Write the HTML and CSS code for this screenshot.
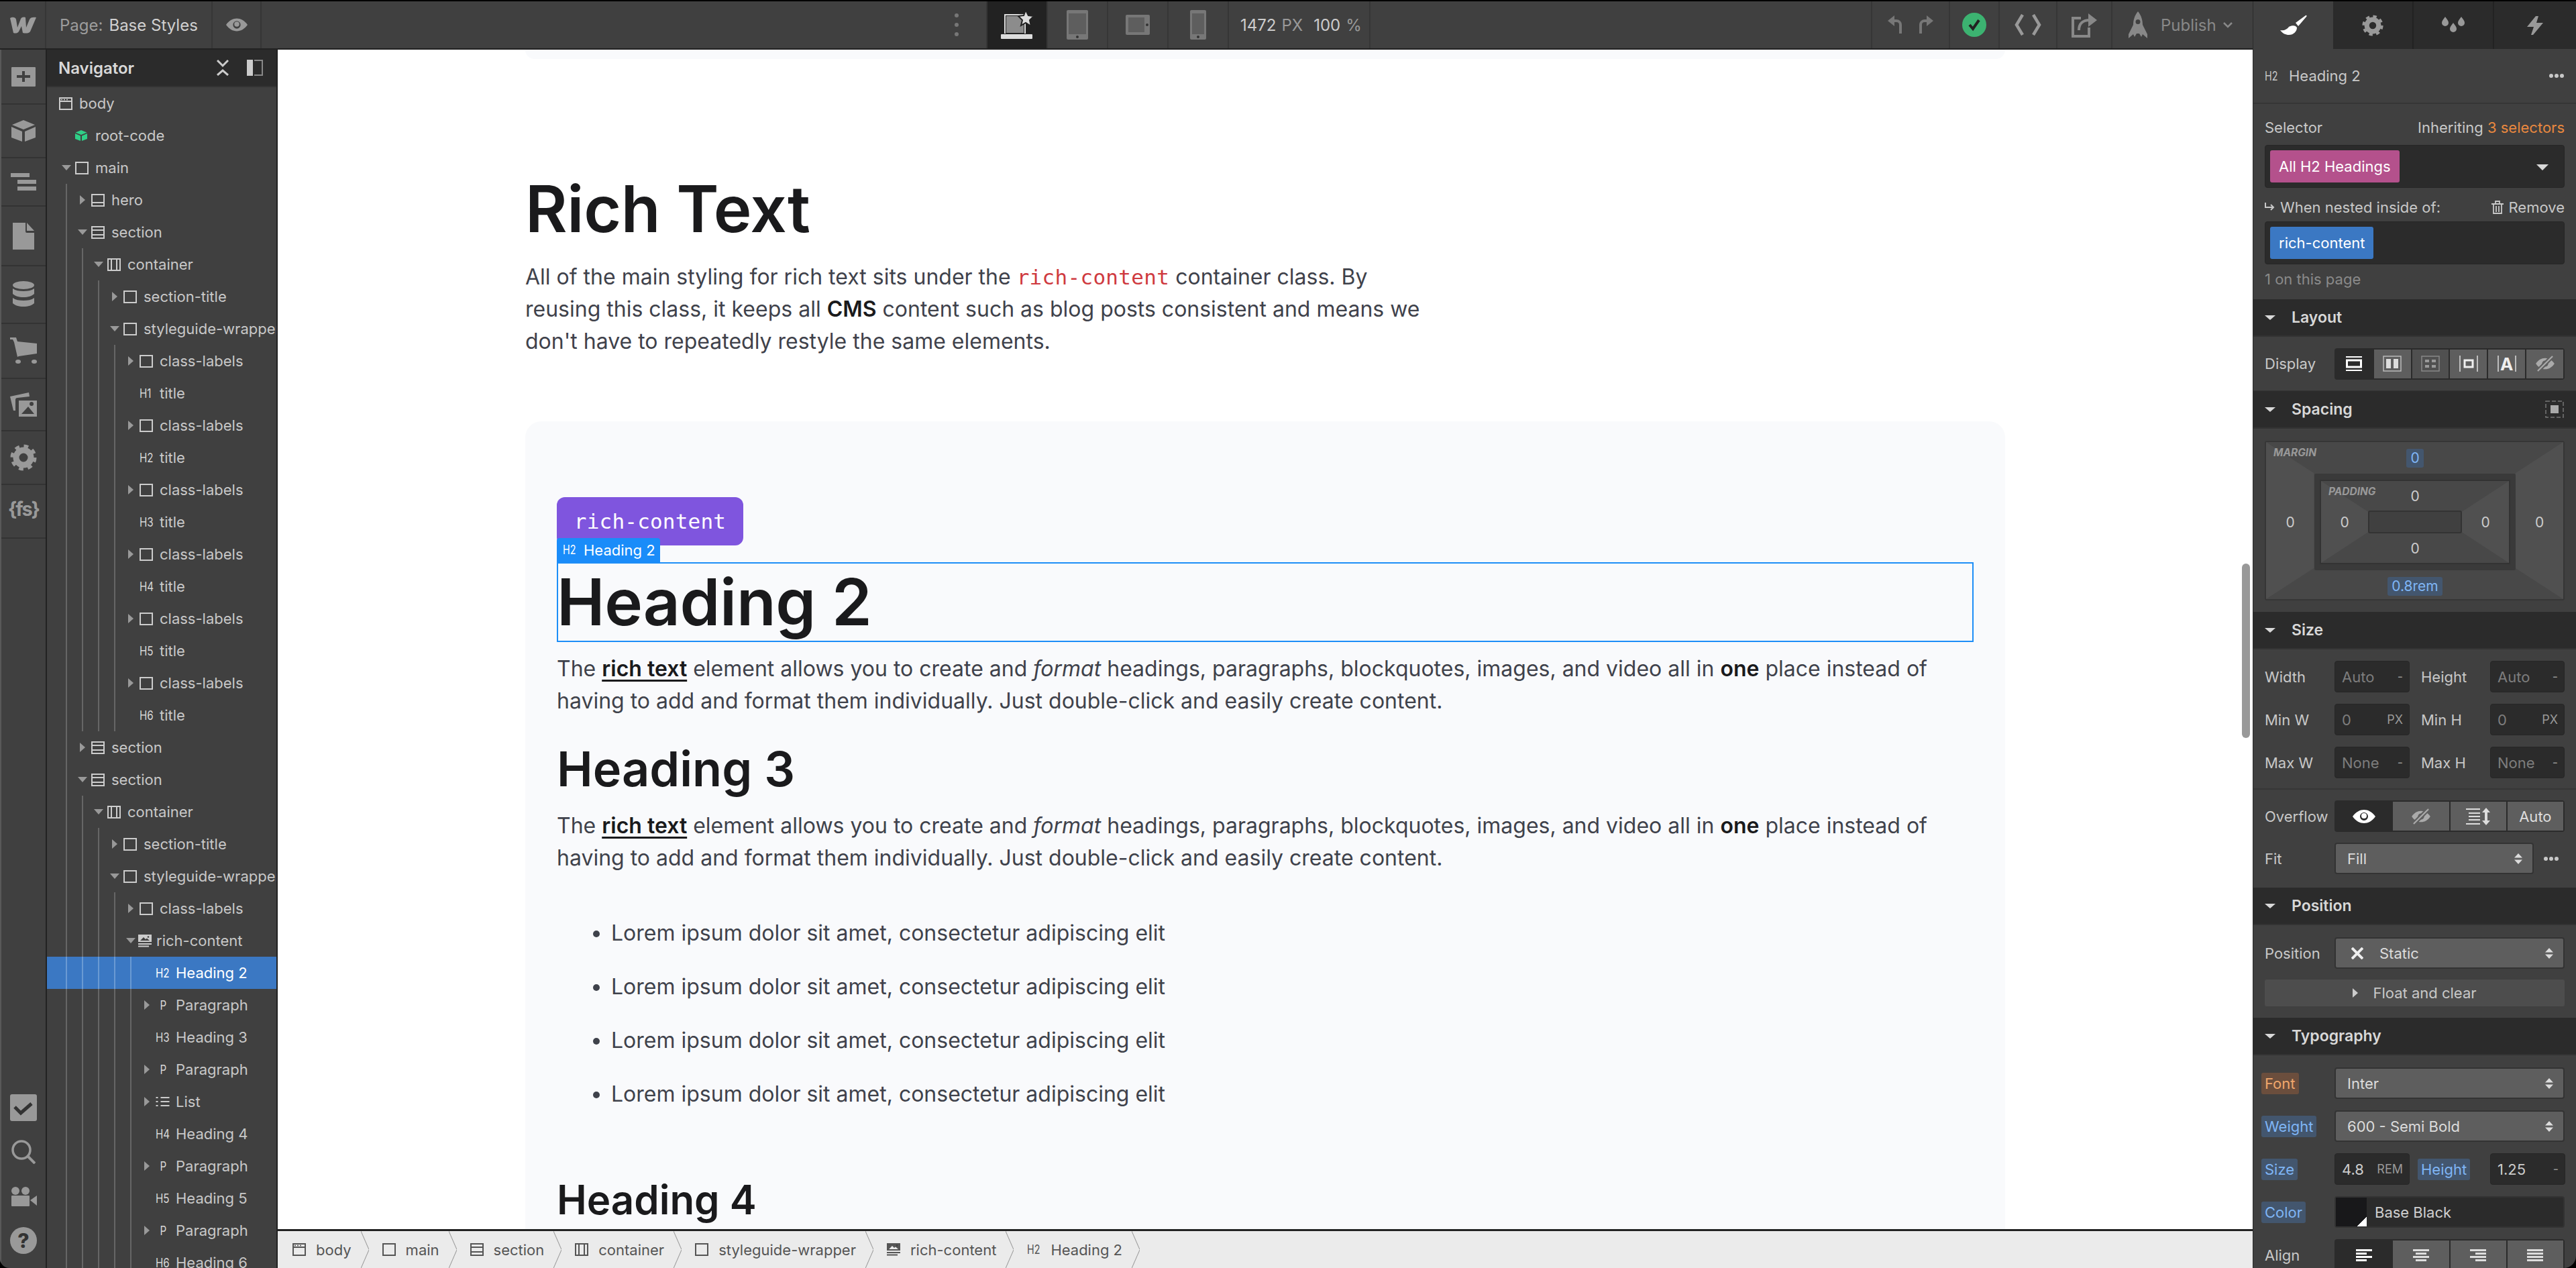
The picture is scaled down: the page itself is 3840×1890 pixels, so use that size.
FILE: index.html
```html
<!DOCTYPE html>
<html lang="en">
<head>
    <meta charset="UTF-8">
    <title>Base Styles - Designer</title>
    <link rel="stylesheet" href="styles.css">
</head>
<body>
<svg class="sprite" aria-hidden="true">
    <symbol id="i-box" viewBox="0 0 20 19"><rect x="1" y="1" width="18" height="17" fill="none" stroke="currentColor" stroke-width="2"/></symbol>
    <symbol id="i-hero" viewBox="0 0 20 19"><rect x="1" y="1" width="18" height="17" fill="none" stroke="currentColor" stroke-width="2"/><path d="M1 13h18" stroke="currentColor" stroke-width="2"/></symbol>
    <symbol id="i-section" viewBox="0 0 20 19"><rect x="1" y="1" width="18" height="17" fill="none" stroke="currentColor" stroke-width="2"/><path d="M1 6h18M1 13h18" stroke="currentColor" stroke-width="2"/></symbol>
    <symbol id="i-container" viewBox="0 0 20 19"><rect x="1" y="1" width="18" height="17" fill="none" stroke="currentColor" stroke-width="2"/><path d="M6 1v17M14 1v17" stroke="currentColor" stroke-width="2"/></symbol>
    <symbol id="i-body" viewBox="0 0 20 19"><rect x="1" y="1" width="18" height="17" fill="none" stroke="currentColor" stroke-width="2"/><path d="M1 6h18" stroke="currentColor" stroke-width="2"/><path d="M3 3.500h2M7 3.500h2M11 3.500h2" stroke="currentColor" stroke-width="1.400"/></symbol>
    <symbol id="i-rich" viewBox="0 0 20 19"><path fill="currentColor" fill-rule="evenodd" d="M0 0h20v11H0zM3 9l5-5 3 3 2-1.500 4 3.500z"/><circle cx="15" cy="3.500" r="1.300" fill="#404040"/><path d="M0 14h20M0 17.500h16" stroke="currentColor" stroke-width="1.800"/></symbol>
    <symbol id="i-list" viewBox="0 0 20 16"><path d="M7 2h13M7 8h13M7 14h13" stroke="currentColor" stroke-width="1.800"/><path d="M0 2h3M0 8h3M0 14h3" stroke="currentColor" stroke-width="2"/></symbol>
    <symbol id="i-cube" viewBox="0 0 36 32"><path fill="currentColor" d="M18 0l17 7-17 7L1 7zM0 10l16 7v15L0 26zM36 10l-16 7v15l16-6z"/></symbol>
    <symbol id="i-eye" viewBox="0 0 34 20"><path fill="currentColor" fill-rule="evenodd" d="M0 10C5 3 11 0 17 0s12 3 17 10c-5 7-11 10-17 10S5 17 0 10zm17-6a6 6 0 0 0 0 12 6 6 0 0 0 0-12z"/><circle cx="17" cy="9" r="4" fill="currentColor"/></symbol>
    <symbol id="i-noeye" viewBox="0 0 30 26"><path fill="currentColor" fill-rule="evenodd" d="M0 13C4 7 9 4 15 4s11 3 15 9c-4 6-9 9-15 9S4 19 0 13zm15-5a5 5 0 0 0 0 10 5 5 0 0 0 0-10z"/><path d="M2 26L28 0" stroke="#5e5e5e" stroke-width="7"/><path d="M3 25L27 1" stroke="currentColor" stroke-width="2.400"/></symbol>
    <symbol id="i-updown" viewBox="0 0 12 16"><path fill="currentColor" d="M6 0l6 6.500H0zM0 9.500h12L6 16z"/></symbol>
    <symbol id="i-dots" viewBox="0 0 24 8"><circle cx="4" cy="4" r="3" fill="currentColor"/><circle cx="12" cy="4" r="3" fill="currentColor"/><circle cx="20" cy="4" r="3" fill="currentColor"/></symbol>
    <symbol id="i-gear" viewBox="0 0 40 40"><circle cx="20" cy="20" r="11" fill="none" stroke="currentColor" stroke-width="9"/><circle cx="20" cy="20" r="16.500" fill="none" stroke="currentColor" stroke-width="6" stroke-dasharray="6.500 6.460"/></symbol>
</svg>

<div class="app">
    <div class="main-col">
        <header class="topbar">
            <div class="bar-cell logo-cell">
                <svg width="40" height="26" viewBox="0 0 40 26"><path fill="#9c9c9c" d="M1 3C4 1 9 1 10 5l2 12 5-13c1-2 3-3 7-2l1 15 5-12c1-3 5-4 10-3l-9 21c-2 3-7 3-11 2l-2-10-4 8c-2 3-6 3-8 2z"/></svg>
            </div>
            <div class="bar-cell page-cell"><span class="page-key">Page:</span><span class="page-name">Base Styles</span></div>
            <div class="bar-cell eye-cell"><svg class="icon-eye" width="32" height="20"><use href="#i-eye"/></svg></div>
            <div class="bar-gap-fixed"></div>
            <div class="bar-cell dots-cell"><svg width="6" height="34" viewBox="0 0 6 34"><circle cx="3" cy="3" r="3" fill="#777"/><circle cx="3" cy="17" r="3" fill="#777"/><circle cx="3" cy="31" r="3" fill="#777"/></svg></div>
            <div class="bar-cell device-cell is-active">
                <svg width="52" height="46" viewBox="0 0 52 46"><path fill="none" stroke="#ddd" stroke-width="2" d="M8 36V8h30v28"/><rect x="10" y="10" width="26" height="25" fill="#8c8c8c"/><rect x="2" y="37" width="47" height="7" rx="1" fill="#ddd"/><path fill="#ddd" stroke="#222" stroke-width="2" d="M39 1l4 8 8 1-6 6 2 9-8-5-7 4 2-8-6-6 8-1z"/></svg>
            </div>
            <div class="bar-cell device-cell">
                <svg width="32" height="44" viewBox="0 0 32 44"><rect width="32" height="44" rx="2" fill="#777"/><rect x="3" y="5" width="26" height="31" fill="#5e5e5e"/><circle cx="16" cy="40" r="2" fill="#333"/></svg>
            </div>
            <div class="bar-cell device-cell">
                <svg width="36" height="30" viewBox="0 0 36 30"><rect width="36" height="30" rx="2" fill="#777"/><rect x="4" y="4" width="24" height="22" fill="#5e5e5e"/><circle cx="32" cy="15" r="2" fill="#333"/></svg>
            </div>
            <div class="bar-cell device-cell">
                <svg width="24" height="44" viewBox="0 0 24 44"><rect width="24" height="44" rx="2" fill="#777"/><rect x="3" y="5" width="18" height="31" fill="#5e5e5e"/><circle cx="12" cy="40" r="2" fill="#333"/></svg>
            </div>
            <div class="bar-cell size-cell"><b>1472</b><span class="dim">PX</span><b class="zoom-val">100</b><span class="dim">%</span></div>
            <div class="bar-gap"></div>
            <div class="bar-cell undo-cell">
                <svg width="22" height="30" viewBox="0 0 22 30"><path fill="none" stroke="#777" stroke-width="4" d="M4 9h9a6 6 0 0 1 6 6v13"/><path fill="#777" d="M10 1v16L0 9z"/></svg>
                <svg width="22" height="30" viewBox="0 0 22 30"><path fill="none" stroke="#777" stroke-width="4" d="M18 9H9a6 6 0 0 0-6 6v13"/><path fill="#777" d="M12 1v16l10-8z"/></svg>
            </div>
            <div class="bar-cell check-cell">
                <svg width="36" height="36" viewBox="0 0 36 36"><circle cx="18" cy="18" r="18" fill="#3cb371"/><path fill="none" stroke="#222" stroke-width="4" d="M11 18l5 6 9-13"/></svg>
            </div>
            <div class="bar-cell code-cell">
                <svg width="42" height="32" viewBox="0 0 42 32"><path fill="none" stroke="#999" stroke-width="4.500" d="M13 1L4 16l9 15M29 1l9 15-9 15"/></svg>
            </div>
            <div class="bar-cell export-cell">
                <svg width="38" height="38" viewBox="0 0 38 38"><path fill="none" stroke="#888" stroke-width="4" d="M14 9H2v27h24V23"/><path fill="none" stroke="#888" stroke-width="4" d="M11 27c0-10 6-15 16-15"/><path fill="#888" d="M25 2l13 10-13 10z"/></svg>
            </div>
            <div class="bar-cell publish-cell">
                <svg width="32" height="40" viewBox="0 0 32 40"><path fill="#888" fill-rule="evenodd" d="M16 0c5 6 7 13 7 20l7 14v6l-7-6-2 4-3-5h-4l-3 5-2-4-7 6v-6l7-14C9 13 11 6 16 0zm0 12a3.500 3.500 0 1 0 0 7 3.500 3.500 0 0 0 0-7z"/></svg>
                <span class="publish-text">Publish</span>
                <svg width="14" height="9" viewBox="0 0 14 9"><path fill="none" stroke="#888" stroke-width="2.500" d="M1 1l6 6 6-6"/></svg>
            </div>
        </header>

        <div class="work">
            <nav class="rail">
                <div class="rail-top">
                    <div class="rail-item"><svg width="36" height="29" viewBox="0 0 36 29"><path fill="#999" fill-rule="evenodd" d="M1 0h34a1 1 0 0 1 1 1v27a1 1 0 0 1-1 1H1a1 1 0 0 1-1-1V1a1 1 0 0 1 1-1zm15 6v6H8v4h8v6h4v-6h8v-4h-8V6z"/></svg></div>
                    <div class="rail-item"><svg class="rail-cube" width="36" height="32"><use href="#i-cube"/></svg></div>
                    <div class="rail-item"><svg width="38" height="26" viewBox="0 0 38 26"><path fill="#999" d="M0 0h28v6H0zM10 10h28v6H10zM10 20h28v6H10z"/></svg></div>
                    <div class="rail-item"><svg width="32" height="40" viewBox="0 0 32 40"><path fill="#999" d="M0 0h19v13a2 2 0 0 0 2 2h11v25H0zM21 0l11 12H21z"/></svg></div>
                    <div class="rail-item"><svg width="32" height="40" viewBox="0 0 32 40"><ellipse cx="16" cy="6" rx="16" ry="6" fill="#999"/><path fill="#999" d="M0 11c4 3 10 4 16 4s12-1 16-4v8c-3 3-9 5-16 5S3 22 0 19zM0 25c4 3 10 4 16 4s12-1 16-4v8c-3 3-9 5-16 5S3 36 0 33z"/></svg></div>
                    <div class="rail-item"><svg width="40" height="40" viewBox="0 0 40 40"><path fill="#999" d="M0 0h9l2 6 29 3v15l-27 4-2 1-5-22-2-4H0z"/><ellipse cx="12" cy="36" rx="4" ry="3" fill="#999"/><ellipse cx="36" cy="36" rx="4" ry="3" fill="#999"/></svg></div>
                    <div class="rail-item"><svg width="40" height="36" viewBox="0 0 40 36"><path fill="#999" d="M0 6L28 0l1 6-18 2a3 3 0 0 0-3 3v16H5z"/><path fill="#999" fill-rule="evenodd" d="M13 12h27v24H13zM17 32h19l-9-11zM32 14a3 3 0 1 0 .1 6 3 3 0 0 0-.1-6z"/></svg></div>
                    <div class="rail-item"><svg class="rail-gear" width="40" height="40"><use href="#i-gear"/></svg></div>
                    <div class="rail-item rail-fs">{fs}</div>
                </div>
                <div class="rail-bottom">
                    <div class="rail-low"><svg width="40" height="40" viewBox="0 0 40 40"><rect width="40" height="40" rx="3" fill="#999"/><path fill="none" stroke="#333" stroke-width="5" d="M7 19l9 9 16-14"/></svg></div>
                    <div class="rail-low"><svg width="36" height="36" viewBox="0 0 36 36"><circle cx="15" cy="15" r="13" fill="none" stroke="#999" stroke-width="3.500"/><path d="M24 24l11 11" stroke="#999" stroke-width="4"/></svg></div>
                    <div class="rail-low"><svg width="40" height="30" viewBox="0 0 40 30"><circle cx="8" cy="7" r="6" fill="#999"/><circle cx="23" cy="7" r="6" fill="#999"/><rect x="2" y="14" width="27" height="16" rx="1" fill="#999"/><path fill="#999" d="M30 21l10-7v15z"/></svg></div>
                    <div class="rail-low rail-help">?</div>
                </div>
            </nav>

            <aside class="navigator">
                <div class="nav-head">
                    <span class="nav-title">Navigator</span>
                    <svg class="nav-collapse" width="18" height="24" viewBox="0 0 18 24"><path fill="none" stroke="#ccc" stroke-width="3" d="M1 1l8 8 8-8M1 23l8-7 8 7"/></svg>
                    <svg class="nav-pin" width="24" height="24" viewBox="0 0 24 24"><rect width="9" height="24" fill="#ccc"/><path fill="none" stroke="#888" stroke-width="2" d="M11 1h12v22H11"/></svg>
                </div>
                <div class="tree">
                    <div class="tree-row"><span class="tree-icon"><svg><use href="#i-body"/></svg></span><span class="tree-label">body</span></div>
                    <div class="tree-row"><i class="cell"></i><span class="tree-icon"><svg class="green"><use href="#i-cube"/></svg></span><span class="tree-label">root-code</span></div>
                    <div class="tree-row"><i class="cell open"></i><span class="tree-icon"><svg><use href="#i-box"/></svg></span><span class="tree-label">main</span></div>
                    <div class="tree-row"><i class="cell guide"></i><i class="cell closed"></i><span class="tree-icon"><svg><use href="#i-hero"/></svg></span><span class="tree-label">hero</span></div>
                    <div class="tree-row"><i class="cell guide"></i><i class="cell open"></i><span class="tree-icon"><svg><use href="#i-section"/></svg></span><span class="tree-label">section</span></div>
                    <div class="tree-row"><i class="cell guide"></i><i class="cell guide"></i><i class="cell open"></i><span class="tree-icon"><svg><use href="#i-container"/></svg></span><span class="tree-label">container</span></div>
                    <div class="tree-row"><i class="cell guide"></i><i class="cell guide"></i><i class="cell guide"></i><i class="cell closed"></i><span class="tree-icon"><svg><use href="#i-box"/></svg></span><span class="tree-label">section-title</span></div>
                    <div class="tree-row"><i class="cell guide"></i><i class="cell guide"></i><i class="cell guide"></i><i class="cell open"></i><span class="tree-icon"><svg><use href="#i-box"/></svg></span><span class="tree-label">styleguide-wrapper</span></div>
                    <div class="tree-row"><i class="cell guide"></i><i class="cell guide"></i><i class="cell guide"></i><i class="cell guide"></i><i class="cell closed"></i><span class="tree-icon"><svg><use href="#i-box"/></svg></span><span class="tree-label">class-labels</span></div>
                    <div class="tree-row"><i class="cell guide"></i><i class="cell guide"></i><i class="cell guide"></i><i class="cell guide"></i><i class="cell"></i><span class="tree-icon tag">H1</span><span class="tree-label">title</span></div>
                    <div class="tree-row"><i class="cell guide"></i><i class="cell guide"></i><i class="cell guide"></i><i class="cell guide"></i><i class="cell closed"></i><span class="tree-icon"><svg><use href="#i-box"/></svg></span><span class="tree-label">class-labels</span></div>
                    <div class="tree-row"><i class="cell guide"></i><i class="cell guide"></i><i class="cell guide"></i><i class="cell guide"></i><i class="cell"></i><span class="tree-icon tag">H2</span><span class="tree-label">title</span></div>
                    <div class="tree-row"><i class="cell guide"></i><i class="cell guide"></i><i class="cell guide"></i><i class="cell guide"></i><i class="cell closed"></i><span class="tree-icon"><svg><use href="#i-box"/></svg></span><span class="tree-label">class-labels</span></div>
                    <div class="tree-row"><i class="cell guide"></i><i class="cell guide"></i><i class="cell guide"></i><i class="cell guide"></i><i class="cell"></i><span class="tree-icon tag">H3</span><span class="tree-label">title</span></div>
                    <div class="tree-row"><i class="cell guide"></i><i class="cell guide"></i><i class="cell guide"></i><i class="cell guide"></i><i class="cell closed"></i><span class="tree-icon"><svg><use href="#i-box"/></svg></span><span class="tree-label">class-labels</span></div>
                    <div class="tree-row"><i class="cell guide"></i><i class="cell guide"></i><i class="cell guide"></i><i class="cell guide"></i><i class="cell"></i><span class="tree-icon tag">H4</span><span class="tree-label">title</span></div>
                    <div class="tree-row"><i class="cell guide"></i><i class="cell guide"></i><i class="cell guide"></i><i class="cell guide"></i><i class="cell closed"></i><span class="tree-icon"><svg><use href="#i-box"/></svg></span><span class="tree-label">class-labels</span></div>
                    <div class="tree-row"><i class="cell guide"></i><i class="cell guide"></i><i class="cell guide"></i><i class="cell guide"></i><i class="cell"></i><span class="tree-icon tag">H5</span><span class="tree-label">title</span></div>
                    <div class="tree-row"><i class="cell guide"></i><i class="cell guide"></i><i class="cell guide"></i><i class="cell guide"></i><i class="cell closed"></i><span class="tree-icon"><svg><use href="#i-box"/></svg></span><span class="tree-label">class-labels</span></div>
                    <div class="tree-row"><i class="cell guide"></i><i class="cell guide"></i><i class="cell guide"></i><i class="cell guide"></i><i class="cell"></i><span class="tree-icon tag">H6</span><span class="tree-label">title</span></div>
                    <div class="tree-row"><i class="cell guide"></i><i class="cell closed"></i><span class="tree-icon"><svg><use href="#i-section"/></svg></span><span class="tree-label">section</span></div>
                    <div class="tree-row"><i class="cell guide"></i><i class="cell open"></i><span class="tree-icon"><svg><use href="#i-section"/></svg></span><span class="tree-label">section</span></div>
                    <div class="tree-row"><i class="cell guide"></i><i class="cell guide"></i><i class="cell open"></i><span class="tree-icon"><svg><use href="#i-container"/></svg></span><span class="tree-label">container</span></div>
                    <div class="tree-row"><i class="cell guide"></i><i class="cell guide"></i><i class="cell guide"></i><i class="cell closed"></i><span class="tree-icon"><svg><use href="#i-box"/></svg></span><span class="tree-label">section-title</span></div>
                    <div class="tree-row"><i class="cell guide"></i><i class="cell guide"></i><i class="cell guide"></i><i class="cell open"></i><span class="tree-icon"><svg><use href="#i-box"/></svg></span><span class="tree-label">styleguide-wrapper</span></div>
                    <div class="tree-row"><i class="cell guide"></i><i class="cell guide"></i><i class="cell guide"></i><i class="cell guide"></i><i class="cell closed"></i><span class="tree-icon"><svg><use href="#i-box"/></svg></span><span class="tree-label">class-labels</span></div>
                    <div class="tree-row"><i class="cell guide"></i><i class="cell guide"></i><i class="cell guide"></i><i class="cell guide"></i><i class="cell open"></i><span class="tree-icon wide"><svg><use href="#i-rich"/></svg></span><span class="tree-label">rich-content</span></div>
                    <div class="tree-row is-selected"><i class="cell guide"></i><i class="cell guide"></i><i class="cell guide"></i><i class="cell guide"></i><i class="cell guide"></i><i class="cell"></i><span class="tree-icon tag">H2</span><span class="tree-label">Heading 2</span></div>
                    <div class="tree-row"><i class="cell guide"></i><i class="cell guide"></i><i class="cell guide"></i><i class="cell guide"></i><i class="cell guide"></i><i class="cell closed"></i><span class="tree-icon tag p-tag">P</span><span class="tree-label">Paragraph</span></div>
                    <div class="tree-row"><i class="cell guide"></i><i class="cell guide"></i><i class="cell guide"></i><i class="cell guide"></i><i class="cell guide"></i><i class="cell"></i><span class="tree-icon tag">H3</span><span class="tree-label">Heading 3</span></div>
                    <div class="tree-row"><i class="cell guide"></i><i class="cell guide"></i><i class="cell guide"></i><i class="cell guide"></i><i class="cell guide"></i><i class="cell closed"></i><span class="tree-icon tag p-tag">P</span><span class="tree-label">Paragraph</span></div>
                    <div class="tree-row"><i class="cell guide"></i><i class="cell guide"></i><i class="cell guide"></i><i class="cell guide"></i><i class="cell guide"></i><i class="cell closed"></i><span class="tree-icon list-ico"><svg><use href="#i-list"/></svg></span><span class="tree-label">List</span></div>
                    <div class="tree-row"><i class="cell guide"></i><i class="cell guide"></i><i class="cell guide"></i><i class="cell guide"></i><i class="cell guide"></i><i class="cell"></i><span class="tree-icon tag">H4</span><span class="tree-label">Heading 4</span></div>
                    <div class="tree-row"><i class="cell guide"></i><i class="cell guide"></i><i class="cell guide"></i><i class="cell guide"></i><i class="cell guide"></i><i class="cell closed"></i><span class="tree-icon tag p-tag">P</span><span class="tree-label">Paragraph</span></div>
                    <div class="tree-row"><i class="cell guide"></i><i class="cell guide"></i><i class="cell guide"></i><i class="cell guide"></i><i class="cell guide"></i><i class="cell"></i><span class="tree-icon tag">H5</span><span class="tree-label">Heading 5</span></div>
                    <div class="tree-row"><i class="cell guide"></i><i class="cell guide"></i><i class="cell guide"></i><i class="cell guide"></i><i class="cell guide"></i><i class="cell closed"></i><span class="tree-icon tag p-tag">P</span><span class="tree-label">Paragraph</span></div>
                    <div class="tree-row"><i class="cell guide"></i><i class="cell guide"></i><i class="cell guide"></i><i class="cell guide"></i><i class="cell guide"></i><i class="cell"></i><span class="tree-icon tag">H6</span><span class="tree-label">Heading 6</span></div>
                </div>
            </aside>

            <div class="canvas-col">
                <main class="canvas">
                    <div class="page">
                        <div class="card-tail"></div>
                        <h1 class="page-title">Rich Text</h1>
                        <p class="page-intro">All of the main styling for rich text sits under the <code>rich-content</code> container class. By reusing this class, it keeps all <strong>CMS</strong> content such as blog posts consistent and means we don't have to repeatedly restyle the same elements.</p>
                        <section class="card">
                            <div class="class-label">rich-content</div>
                            <div class="rich">
                                <h2 class="selected-el"><span class="el-tag"><span class="el-tag-h">H2</span>Heading 2</span>Heading 2</h2>
                                <p>The <a href="#">rich text</a> element allows you to create and <em>format</em> headings, paragraphs, blockquotes, images, and video all in <strong>one</strong> place instead of having to add and format them individually. Just double-click and easily create content.</p>
                                <h3>Heading 3</h3>
                                <p>The <a href="#">rich text</a> element allows you to create and <em>format</em> headings, paragraphs, blockquotes, images, and video all in <strong>one</strong> place instead of having to add and format them individually. Just double-click and easily create content.</p>
                                <ul>
                                    <li>Lorem ipsum dolor sit amet, consectetur adipiscing elit</li>
                                    <li>Lorem ipsum dolor sit amet, consectetur adipiscing elit</li>
                                    <li>Lorem ipsum dolor sit amet, consectetur adipiscing elit</li>
                                    <li>Lorem ipsum dolor sit amet, consectetur adipiscing elit</li>
                                </ul>
                                <h4>Heading 4</h4>
                            </div>
                        </section>
                    </div>
                    <div class="scroll-thumb"></div>
                </main>
                <footer class="crumbs">
                    <div class="crumb"><svg><use href="#i-body"/></svg><span>body</span></div>
                    <div class="crumb"><svg><use href="#i-box"/></svg><span>main</span></div>
                    <div class="crumb"><svg><use href="#i-section"/></svg><span>section</span></div>
                    <div class="crumb"><svg><use href="#i-container"/></svg><span>container</span></div>
                    <div class="crumb"><svg><use href="#i-box"/></svg><span>styleguide-wrapper</span></div>
                    <div class="crumb"><svg><use href="#i-rich"/></svg><span>rich-content</span></div>
                    <div class="crumb"><b class="crumb-tag">H2</b><span>Heading 2</span></div>
                </footer>
            </div>
        </div>
    </div>

    <aside class="props">
        <div class="props-tabs">
            <div class="props-tab is-active"><svg width="40" height="32" viewBox="0 0 40 32"><path fill="#fff" d="M23 12L38 1c1-.6 2 .5 1.400 1.400L27 17zM0 23c6 1 10-1 13-5 3-2 8-2 10-1l2 2c0 6-5 11-12 11-5 0-9-2-13-7z"/></svg></div>
            <div class="props-tab"><svg class="tab-gear" width="32" height="32"><use href="#i-gear"/></svg></div>
            <div class="props-tab"><svg width="34" height="26" viewBox="0 0 34 26"><path fill="#999" d="M5 0c3 4 5 6 5 9a5 5 0 0 1-10 0c0-3 2-5 5-9zM29 0c3 4 5 6 5 9a5 5 0 0 1-10 0c0-3 2-5 5-9zM17 9c3 4 5 6 5 9a5 5 0 0 1-10 0c0-3 2-5 5-9z"/></svg></div>
            <div class="props-tab"><svg width="24" height="28" viewBox="0 0 24 28"><path fill="#999" d="M13 0h4l-3 10h10L9 28h-3l4-12H0z"/></svg></div>
        </div>
        <div class="props-head"><span class="tag-mini">H2</span><span class="props-name">Heading 2</span><svg class="more" width="24" height="8"><use href="#i-dots"/></svg></div>

        <div class="selector">
            <div class="sel-top"><span>Selector</span><span>Inheriting <em class="orange">3 selectors</em></span></div>
            <div class="sel-box"><span class="chip chip-pink">All H2 Headings</span><i class="caret-down"></i></div>
            <div class="sel-nested">
                <svg width="15" height="14" viewBox="0 0 15 14"><path fill="none" stroke="#c8c8c8" stroke-width="2" d="M1 0v7h11M9 3l4 4-4 4"/></svg>
                <span>When nested inside of:</span>
                <svg class="trash" width="18" height="20" viewBox="0 0 18 20"><path fill="none" stroke="#c8c8c8" stroke-width="1.800" d="M0 5h18M6 5V1h6v4M3 5v14h12V5M7 8v9M11 8v9"/></svg>
                <span>Remove</span>
            </div>
            <div class="sel-box sel-box-nested"><span class="chip chip-blue">rich-content</span></div>
            <div class="sel-count">1 on this page</div>
        </div>

        <div class="sec-head"><i class="caret-down small"></i>Layout</div>
        <div class="sec-body display-body">
            <span class="lbl">Display</span>
            <div class="seg seg-six">
                <div class="seg-btn is-on"><svg width="24" height="22" viewBox="0 0 24 22"><path fill="none" stroke="#fff" stroke-width="2" d="M0 1h24M0 21h24"/><rect x="1.500" y="6" width="21" height="10" fill="none" stroke="#fff" stroke-width="3"/></svg></div>
                <div class="seg-btn"><svg width="28" height="24" viewBox="0 0 28 24"><rect x="1" y="1" width="26" height="22" fill="none" stroke="#bbb" stroke-width="1.500"/><path fill="#ddd" d="M5 5h7v14H5zM16 5h7v14h-7z"/></svg></div>
                <div class="seg-btn seg-dim"><svg width="28" height="24" viewBox="0 0 28 24"><rect x="1" y="1" width="26" height="22" fill="none" stroke="#888" stroke-width="1.500"/><path fill="#999" d="M6 6h6v4H6zM16 6h6v4h-6zM6 14h6v4H6zM16 14h6v4h-6z"/></svg></div>
                <div class="seg-btn"><svg width="28" height="24" viewBox="0 0 28 24"><path stroke="#ddd" stroke-width="1.500" d="M1 0v24M27 0v24"/><rect x="8" y="7" width="12" height="10" fill="none" stroke="#eee" stroke-width="3"/></svg></div>
                <div class="seg-btn"><svg width="28" height="24" viewBox="0 0 28 24"><path stroke="#ddd" stroke-width="1.500" d="M1 0v24M27 0v24"/></svg><b class="seg-a">A</b></div>
                <div class="seg-btn"><svg class="muted" width="28" height="24"><use href="#i-noeye"/></svg></div>
            </div>
        </div>

        <div class="sec-head"><i class="caret-down small"></i>Spacing<svg class="spacing-ico" width="28" height="26" viewBox="0 0 28 26"><rect x="1" y="1" width="26" height="24" fill="none" stroke="#777" stroke-width="1.500" stroke-dasharray="6 3"/><rect x="8" y="7" width="12" height="12" fill="#aaa"/></svg></div>
        <div class="spacing-body">
            <div class="box-model">
                <svg class="box-shade" viewBox="0 0 447 238" preserveAspectRatio="none"><path fill="#505050" d="M0 0L72 47V191L0 238zM447 0L375 47V191L447 238z"/></svg>
                <span class="box-cap">MARGIN</span>
                <span class="bv bv-top"><span class="bv-set">0</span></span>
                <span class="bv bv-left">0</span>
                <div class="box-inner">
                    <div class="box-pad">
                        <svg class="box-shade" viewBox="0 0 288 125" preserveAspectRatio="none"><path fill="#505050" d="M0 0L72 47V78L0 125zM288 0L216 47V78L288 125z"/></svg>
                        <span class="box-cap">PADDING</span>
                        <span class="bv bv-top">0</span>
                        <span class="bv bv-left">0</span>
                        <div class="box-core"></div>
                        <span class="bv bv-right">0</span>
                        <span class="bv bv-bottom">0</span>
                    </div>
                </div>
                <span class="bv bv-right">0</span>
                <span class="bv bv-bottom"><span class="bv-set">0.8rem</span></span>
            </div>
        </div>

        <div class="sec-head"><i class="caret-down small"></i>Size</div>
        <div class="size-body">
            <div class="size-grid">
                <span class="lbl">Width</span><div class="inp"><span>Auto</span><small>-</small></div><span class="lbl">Height</span><div class="inp"><span>Auto</span><small>-</small></div>
                <span class="lbl">Min W</span><div class="inp"><span>0</span><small>PX</small></div><span class="lbl">Min H</span><div class="inp"><span>0</span><small>PX</small></div>
                <span class="lbl">Max W</span><div class="inp"><span>None</span><small>-</small></div><span class="lbl">Max H</span><div class="inp"><span>None</span><small>-</small></div>
            </div>
        </div>
        <div class="over-body">
            <div class="form-row">
                <span class="lbl">Overflow</span>
                <div class="seg seg-four">
                    <div class="seg-btn is-on"><svg class="white" width="34" height="20"><use href="#i-eye"/></svg></div>
                    <div class="seg-btn"><svg class="muted" width="28" height="24"><use href="#i-noeye"/></svg></div>
                    <div class="seg-btn"><svg width="36" height="26" viewBox="0 0 36 26"><path stroke="#ddd" stroke-width="2" d="M0 2h21M4 8h17M4 13h17M4 18h17M0 24h21"/><path fill="#ddd" d="M30 0l6 7h-4v12h4l-6 7-6-7h4V7h-4z"/></svg></div>
                    <div class="seg-btn seg-text">Auto</div>
                </div>
            </div>
            <div class="form-row">
                <span class="lbl">Fit</span>
                <div class="select select-fit"><span>Fill</span><svg width="12" height="16"><use href="#i-updown"/></svg></div>
                <svg class="fit-more" width="24" height="8"><use href="#i-dots"/></svg>
            </div>
        </div>

        <div class="sec-head"><i class="caret-down small"></i>Position</div>
        <div class="pos-body">
            <div class="form-row">
                <span class="lbl">Position</span>
                <div class="select"><svg class="pos-x" width="18" height="18" viewBox="0 0 18 18"><path stroke="#eee" stroke-width="4" d="M1 1l16 16M17 1L1 17"/></svg><span>Static</span><svg class="up-right" width="12" height="16"><use href="#i-updown"/></svg></div>
            </div>
            <div class="float-btn"><i class="caret-right"></i>Float and clear</div>
        </div>

        <div class="sec-head"><i class="caret-down small"></i>Typography</div>
        <div class="typo-body">
            <div class="form-row"><span class="lbl"><span class="flag flag-orange">Font</span></span><div class="select"><span>Inter</span><svg class="up-right" width="12" height="16"><use href="#i-updown"/></svg></div></div>
            <div class="form-row"><span class="lbl"><span class="flag">Weight</span></span><div class="select"><span>600 - Semi Bold</span><svg class="up-right" width="12" height="16"><use href="#i-updown"/></svg></div></div>
            <div class="form-row size-line">
                <span class="lbl"><span class="flag">Size</span></span><div class="inp is-set"><span>4.8</span><small>REM</small></div>
                <span class="lbl lbl-mid"><span class="flag">Height</span></span><div class="inp is-set"><span>1.25</span><small>-</small></div>
            </div>
            <div class="form-row"><span class="lbl"><span class="flag">Color</span></span><div class="color-field"><i class="swatch"></i><span>Base Black</span></div></div>
            <div class="form-row">
                <span class="lbl">Align</span>
                <div class="seg seg-four">
                    <div class="seg-btn is-on"><svg width="24" height="18" viewBox="0 0 24 18"><path stroke="#fff" stroke-width="3" d="M0 1.500h24M0 6.500h16M0 11.500h24M0 16.500h16"/></svg></div>
                    <div class="seg-btn"><svg width="24" height="18" viewBox="0 0 24 18"><path stroke="#ddd" stroke-width="3" d="M0 1.500h24M4 6.500h16M0 11.500h24M4 16.500h16"/></svg></div>
                    <div class="seg-btn"><svg width="24" height="18" viewBox="0 0 24 18"><path stroke="#ddd" stroke-width="3" d="M0 1.500h24M8 6.500h16M0 11.500h24M8 16.500h16"/></svg></div>
                    <div class="seg-btn"><svg width="24" height="18" viewBox="0 0 24 18"><path stroke="#ddd" stroke-width="3" d="M0 1.500h24M0 6.500h24M0 11.500h24M0 16.500h24"/></svg></div>
                </div>
            </div>
        </div>
    </aside>
</div>
</body>
</html>
```

FILE: styles.css
```css
* {
    box-sizing: border-box;
}
html, body {
    margin: 0;
    padding: 0;
    background: #000;
}
body {
    width: 3840px;
    height: 1890px;
    overflow: hidden;
    font-family: Inter, "Noto Sans", sans-serif;
    font-size: 22px;
    color: #c8c8c8;
}
.sprite {
    display: none;
}
.app {
    display: flex;
    width: 3840px;
    height: 1890px;
    padding-top: 2px;
    overflow: hidden;
    border-radius: 0 0 18px 14px;
}
.main-col {
    width: 3358px;
    display: flex;
    flex-direction: column;
    flex: none;
}

/* top bar */
.topbar {
    height: 72px;
    display: flex;
    background: #404040;
    border-bottom: 2px solid #222;
    flex: none;
    font-size: 24px;
}
.bar-cell {
    height: 100%;
    display: flex;
    align-items: center;
    justify-content: center;
    border-right: 2px solid #363636;
    flex: none;
}
.logo-cell { width: 69px; }
.page-cell { width: 248px; justify-content: flex-start; padding-left: 20px; gap: 9px; }
.page-key { color: #9c9c9c; }
.page-name { color: #d0d0d0; }
.eye-cell { width: 73px; }
.icon-eye { color: #999; }
.bar-gap-fixed { width: 992px; flex: none; }
.bar-gap { flex: 1; border-right: 2px solid #363636; }
.dots-cell { width: 90px; border-left: 0; }
.device-cell { width: 90px; }
.device-cell.is-active { background: #222; }
.size-cell { width: 211px; justify-content: flex-start; padding-left: 17px; gap: 8px; color: #ccc; }
.size-cell b { font-weight: 400; }
.size-cell .zoom-val { margin-left: 8px; }
.dim { color: #999; }
.undo-cell { width: 116px; gap: 24px; }
.check-cell { width: 74px; }
.code-cell { width: 86px; }
.export-cell { width: 82px; }
.publish-cell { width: 209px; border-right: 0; gap: 10px; justify-content: flex-start; padding-left: 22px; }
.publish-text { color: #888; margin-left: 8px; }

.work {
    flex: 1;
    display: flex;
    min-height: 0;
}

/* left rail */
.rail {
    width: 70px;
    flex: none;
    display: flex;
    flex-direction: column;
    justify-content: space-between;
    background: #404040;
    border-right: 2px solid #222;
    border-left: 2px solid #595959;
}
.rail-item {
    display: flex;
    align-items: center;
    justify-content: center;
    border-bottom: 2px solid #333;
}
.rail-item:nth-child(1) { height: 82px; }
.rail-item:nth-child(2) { height: 80px; }
.rail-item:nth-child(3) { height: 72px; }
.rail-item:nth-child(4) { height: 89px; }
.rail-item:nth-child(5) { height: 86px; }
.rail-item:nth-child(6) { height: 82px; }
.rail-item:nth-child(7) { height: 78px; }
.rail-item:nth-child(8) { height: 80px; }
.rail-item:nth-child(9) { height: 80px; }
.rail-cube, .rail-gear { color: #999; }
.rail-fs {
    font-size: 29px;
    font-weight: 700;
    letter-spacing: -2px;
    color: #999;
    padding-bottom: 8px;
}
.rail-bottom {
    padding-bottom: 21px;
}
.rail-low {
    height: 66px;
    display: flex;
    align-items: center;
    justify-content: center;
}
.rail-help {
    width: 40px;
    height: 40px;
    margin: 13px auto 0;
    background: #999;
    border-radius: 50%;
    color: #333;
    font-weight: 800;
    font-size: 30px;
}

/* navigator */
.navigator {
    width: 344px;
    flex: none;
    background: #404040;
    border-right: 2px solid #222;
    overflow: hidden;
}
.nav-head {
    height: 56px;
    display: flex;
    align-items: center;
    padding-left: 17px;
    background: #2b2b2b;
    border-bottom: 2px solid #333;
    font-size: 24px;
}
.nav-title {
    font-weight: 600;
    color: #d8d8d8;
    flex: 1;
}
.nav-collapse { margin-right: 27px; }
.nav-pin { margin-right: 20px; }
.tree-row {
    height: 48px;
    display: flex;
    align-items: center;
    padding-left: 17px;
    white-space: nowrap;
}
.tree-row.is-selected {
    background: #3b78c3;
    color: #fff;
}
.cell {
    position: relative;
    width: 24px;
    height: 48px;
    flex: none;
}
.cell.guide::before {
    content: "";
    position: absolute;
    left: 11px;
    top: 0;
    bottom: 0;
    width: 2px;
    background: #666;
}
.is-selected .cell.guide::before {
    background: #6a9ad3;
}
.cell.open::before {
    content: "";
    position: absolute;
    left: 5px;
    top: 20px;
    border-left: 7px solid transparent;
    border-right: 7px solid transparent;
    border-top: 8px solid #999;
}
.cell.closed::before {
    content: "";
    position: absolute;
    left: 8px;
    top: 17px;
    border-top: 7px solid transparent;
    border-bottom: 7px solid transparent;
    border-left: 8px solid #999;
}
.tree-icon {
    width: 30px;
    margin-left: 1px;
    flex: none;
    display: flex;
    align-items: center;
    color: #ccc;
}
.tree-icon svg {
    width: 20px;
    height: 19px;
}
.tree-icon.list-ico svg {
    width: 21px;
    height: 16px;
}
.tree-icon.wide { width: 27px; margin-left: -1px; }
.tree-icon.tag {
    font-size: 19px;
    font-weight: 400;
    color: #d8d8d8;
    transform: scaleX(.8);
    transform-origin: left center;
}
.tree-icon.p-tag { padding-left: 8px; }
.is-selected .tree-icon { color: #fff; }
.tree-icon .green {
    width: 18px;
    height: 20px;
    color: #2fd087;
}

/* canvas */
.canvas-col {
    flex: 1;
    display: flex;
    flex-direction: column;
    min-width: 0;
}
.canvas {
    position: relative;
    flex: 1;
    background: #fff;
    overflow: hidden;
    min-height: 0;
}
.page {
    padding: 0 369px;
    color: #3f424b;
}
.card-tail {
    height: 14px;
    background: #f9fafc;
    border-radius: 0 0 24px 24px;
}
.page-title {
    margin: 163px 0 18px;
    font-size: 96px;
    line-height: 120px;
    font-weight: 600;
    letter-spacing: -.3px;
    color: #1a1a1c;
}
.page-intro {
    margin: 0;
    width: 1360px;
    font-size: 32px;
    line-height: 48px;
}
code {
    font-family: "DejaVu Sans Mono", "Liberation Mono", monospace;
    font-size: 31px;
    line-height: 1;
    letter-spacing: .3px;
    color: #cf3a3f;
}
.page-intro strong, .rich strong {
    font-weight: 600;
    color: #1a1a1c;
}
.card {
    margin-top: 95px;
    padding: 113px 47px 0;
    height: 1400px;
    background: #f9fafc;
    border-radius: 24px;
}
.class-label {
    width: 278px;
    height: 72px;
    display: flex;
    align-items: center;
    justify-content: center;
    background: #7f55de;
    color: #fff;
    border-radius: 12px;
    font-family: "DejaVu Sans Mono", "Liberation Mono", monospace;
    font-size: 31px;
    letter-spacing: .2px;
}
.rich {
    margin-top: 25px;
}
.rich h2, .rich h3, .rich h4 {
    margin: 0;
    font-weight: 600;
    color: #1a1a1c;
}
.rich h2 {
    font-size: 96px;
    line-height: 119px;
    letter-spacing: -.3px;
}
.rich h3 {
    margin-top: 32px;
    font-size: 72px;
    line-height: 90px;
}
.rich h4 {
    margin-top: 96px;
    font-size: 60px;
    line-height: 75px;
}
.rich p {
    margin: 16px 0 0;
    font-size: 32px;
    line-height: 48px;
}
.rich a {
    color: #1a1a1c;
    font-weight: 600;
    text-decoration: underline;
    text-decoration-thickness: 3px;
    text-underline-offset: 5px;
}
.rich ul {
    margin: 64px 0 0;
    padding: 0 0 0 81px;
    font-size: 32px;
    line-height: 48px;
}
.rich li + li {
    margin-top: 32px;
}
.selected-el {
    position: relative;
    outline: 2px solid #1e8ef7;
    outline-offset: -2px;
}
.el-tag {
    position: absolute;
    left: 0;
    top: -36px;
    width: 154px;
    height: 36px;
    display: flex;
    align-items: center;
    padding-left: 9px;
    gap: 5px;
    background: #1a8cf9;
    color: #fff;
    border-radius: 4px 4px 0 0;
    font-size: 22px;
    line-height: 36px;
    font-weight: 400;
    letter-spacing: 0;
}
.el-tag-h {
    width: 26px;
    font-size: 18px;
    font-weight: 400;
    transform: scaleX(.8);
    transform-origin: left center;
}
.scroll-thumb {
    position: absolute;
    right: 4px;
    top: 766px;
    width: 12px;
    height: 260px;
    background: #999;
    border-radius: 6px;
}

/* breadcrumb bar */
.crumbs {
    height: 58px;
    flex: none;
    display: flex;
    align-items: stretch;
    background: #ebebeb;
    border-top: 3px solid #222;
    color: #555;
}
.crumb {
    position: relative;
    display: flex;
    align-items: center;
    padding: 0 26px 0 20px;
    gap: 15px;
}
.crumb::after {
    content: "";
    position: absolute;
    right: 0;
    top: 0;
    bottom: 0;
    width: 12px;
    background:
        linear-gradient(to bottom right, transparent calc(50% - 1px), #999 50%, transparent calc(50% + 1px)) bottom / 12px 50% no-repeat,
        linear-gradient(to top right, transparent calc(50% - 1px), #999 50%, transparent calc(50% + 1px)) top / 12px 50% no-repeat;
}
.crumb:first-child {
    padding-left: 22px;
}
.crumb svg {
    width: 20px;
    height: 19px;
}
.crumb-tag {
    width: 20px;
    font-size: 18px;
    font-weight: 400;
    transform: scaleX(.8);
    transform-origin: left center;
}

/* right panel */
.props {
    width: 482px;
    flex: none;
    background: #404040;
    border-left: 1px solid #2b2b2b;
    overflow: hidden;
}
.props-tabs {
    height: 71px;
    display: flex;
    background: #2b2b2b;
}
.props-tab {
    width: 120px;
    display: flex;
    align-items: center;
    justify-content: center;
    border-right: 2px solid #222;
}
.props-tab:last-child { flex: 1; border-right: 0; }
.props-tab.is-active { width: 119px; background: #404040; border-right: 0; }
.tab-gear { color: #999; }
.props-head {
    height: 82px;
    display: flex;
    align-items: center;
    padding: 0 17px;
    border-bottom: 2px solid #363636;
}
.tag-mini {
    width: 36px;
    font-size: 18px;
    font-weight: 400;
    transform: scaleX(.8);
    transform-origin: left center;
}
.props-name { flex: 1; }
.more, .fit-more { color: #c8c8c8; }
.selector {
    height: 291px;
    padding: 20px 17px 0;
}
.sel-top {
    height: 30px;
    display: flex;
    justify-content: space-between;
    align-items: center;
    margin-bottom: 11px;
}
.orange {
    font-style: normal;
    color: #e9883f;
}
.sel-box {
    position: relative;
    height: 64px;
    padding: 7px;
    background: #2b2b2b;
    border-radius: 4px;
    border: 1px solid #262626;
}
.sel-box-nested {
    margin-top: 6px;
}
.chip {
    display: inline-block;
    height: 48px;
    line-height: 48px;
    padding: 0 13px;
    border-radius: 3px;
    color: #fff;
}
.chip-pink { background: #b4518c; }
.chip-blue { background: #3b78c3; }
.caret-down {
    position: absolute;
    display: block;
    right: 23px;
    top: 28px;
    border-left: 9px solid transparent;
    border-right: 9px solid transparent;
    border-top: 9px solid #d8d8d8;
}
.sel-nested {
    height: 30px;
    margin-top: 14px;
    display: flex;
    align-items: center;
    gap: 8px;
}
.sel-nested .trash {
    margin-left: auto;
}
.sel-count {
    margin-top: 7px;
    line-height: 30px;
    color: #8a8a8a;
}
.sec-head {
    position: relative;
    height: 56px;
    display: flex;
    align-items: center;
    padding-left: 57px;
    background: #2b2b2b;
    font-weight: 600;
    font-size: 23px;
    color: #d8d8d8;
    border-bottom: 2px solid #333;
}
.caret-down.small {
    left: 17px;
    right: auto;
    top: 24px;
    border-left-width: 8px;
    border-right-width: 8px;
    border-top-width: 7px;
}
.spacing-ico {
    position: absolute;
    right: 18px;
    top: 14px;
}
.lbl {
    width: 104px;
    flex: none;
}
.display-body {
    height: 81px;
    display: flex;
    align-items: center;
    padding: 0 17px;
    border-bottom: 1px solid #333;
}
.seg {
    flex: 1;
    height: 47px;
    display: flex;
    gap: 2px;
    padding: 2px;
    background: #2b2b2b;
    border-radius: 4px;
}
.seg-btn {
    position: relative;
    flex: 1;
    display: flex;
    align-items: center;
    justify-content: center;
    background: #5e5e5e;
    color: #ddd;
}
.seg-btn.is-on {
    background: #2b2b2b;
}
.seg-dim {
    background: #505050;
}
.seg-a {
    position: absolute;
    font-size: 26px;
    font-weight: 700;
    color: #eee;
}
.seg-text { color: #ddd; }
.white { color: #fff; }
.muted { color: #aaa; }
.spacing-body {
    height: 273px;
    padding: 18px 17px 0;
}
.box-model, .box-pad {
    position: relative;
    display: grid;
    justify-items: center;
    align-items: center;
    background: #484848;
    color: #ccc;
}
.box-model {
    height: 238px;
    grid-template-columns: 72px 1fr 71px;
    grid-template-rows: 47px 144px 47px;
    border: 2px solid #363636;
    border-radius: 3px;
}
.box-inner {
    grid-row: 2;
    grid-column: 2;
    width: 100%;
    height: 100%;
    padding: 9px 8px;
    background: #3a3a3a;
    position: relative;
    border-radius: 2px;
}
.box-pad {
    height: 100%;
    grid-template-columns: 70px 1fr 70px;
    grid-template-rows: 44px 1fr 44px;
    border: 2px solid #333;
}
.box-shade {
    position: absolute;
    left: 0;
    top: 0;
    width: 100%;
    height: 100%;
}
.box-cap {
    position: absolute;
    left: 11px;
    top: 6px;
    font-size: 15.500px;
    font-weight: 700;
    font-style: italic;
    color: #999;
}
.bv {
    position: relative;
    font-size: 21px;
}
.bv-top { grid-row: 1; grid-column: 2; }
.bv-left { grid-row: 2; grid-column: 1; }
.bv-right { grid-row: 2; grid-column: 3; }
.bv-bottom { grid-row: 3; grid-column: 2; }
.bv-set {
    display: block;
    padding: 2px 6px;
    min-width: 20px;
    background: #43566e;
    color: #7fb5f5;
    border-radius: 3px;
    line-height: 24px;
    text-align: center;
}
.box-core {
    position: relative;
    grid-row: 2;
    grid-column: 2;
    width: 100%;
    height: 100%;
    background: #404040;
    border: 2px solid #333;
    border-radius: 3px;
}
.size-body {
    height: 209px;
    padding: 17px 17px 0;
    border-bottom: 2px solid #363636;
}
.size-grid {
    display: grid;
    grid-template-columns: 104px 112px 120px 111px;
    grid-auto-rows: 47px;
    row-gap: 17px;
    align-items: center;
}
.size-grid .lbl:nth-child(4n+3), .lbl-mid {
    width: auto;
    padding-left: 17px;
}
.inp {
    height: 47px;
    display: flex;
    align-items: center;
    justify-content: space-between;
    padding: 0 9px 0 10px;
    background: #2b2b2b;
    border: 1px solid #262626;
    border-radius: 4px;
    color: #7d7d7d;
}
.inp small {
    font-size: 18px;
    color: #999;
}
.inp.is-set {
    color: #ccc;
    width: 112px;
    flex: none;
}
.over-body {
    height: 146px;
    padding: 16px 17px 0;
}
.form-row {
    height: 47px;
    display: flex;
    align-items: center;
}
.form-row + .form-row {
    margin-top: 16px;
}
.select {
    flex: 1;
    height: 47px;
    display: flex;
    align-items: center;
    justify-content: space-between;
    padding: 0 15px 0 17px;
    background: #5e5e5e;
    border: 2px solid #333;
    border-radius: 4px;
    color: #dcdcdc;
}
.select-fit {
    flex: none;
    width: 297px;
}
.fit-more {
    margin-left: 14px;
}
.up-right {
    margin-left: auto;
}
.pos-x {
    margin: 0 24px 0 6px;
}
.pos-body {
    height: 138px;
    padding: 18px 17px 0;
}
.float-btn {
    height: 40px;
    margin-top: 16px;
    display: flex;
    align-items: center;
    justify-content: center;
    gap: 22px;
    background: #4d4d4d;
    border-radius: 3px;
}
.caret-right {
    border-top: 7px solid transparent;
    border-bottom: 7px solid transparent;
    border-left: 8px solid #ccc;
}
.typo-body {
    padding: 18px 17px 0;
}
.typo-body .form-row + .form-row {
    margin-top: 17px;
}
.flag {
    display: inline-block;
    margin-left: -5px;
    padding: 0 5px;
    line-height: 32px;
    background: #43566e;
    color: #7fb5f5;
    border-radius: 3px;
}
.flag-orange {
    background: #6b4e3d;
    color: #f0a66c;
}
.size-line .lbl-mid {
    width: 120px;
    padding-left: 17px;
}
.color-field {
    flex: 1;
    height: 47px;
    display: flex;
    align-items: center;
    background: #2b2b2b;
    border: 2px solid #333;
    border-radius: 4px;
    color: #d0d0d0;
}
.swatch {
    width: 46px;
    height: 43px;
    margin-right: 12px;
    background: linear-gradient(135deg, #18181a 84%, #fff 84%);
}
```
